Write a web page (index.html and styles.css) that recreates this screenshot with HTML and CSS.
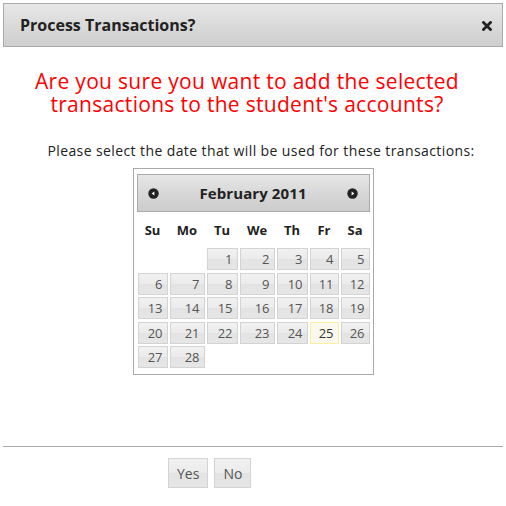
FILE: index.html
```html
<!DOCTYPE html>
<html>
<head>
<meta charset="utf-8">
<link rel="stylesheet" href="styles.css">
</head>
<body>
<div class="dialog">
  <div class="titlebar">
    <span class="title">Process Transactions?</span>
    <span class="close" aria-label="close">
      <svg width="10" height="10" viewBox="0 0 10 10"><path d="M1.5 1.5 L8.5 8.5 M8.5 1.5 L1.5 8.5" stroke="#222" stroke-width="2.8" stroke-linecap="square"/></svg>
    </span>
  </div>
  <div class="content">
    <p class="warning">Are you sure you want to add the selected<br>transactions to the student's accounts?</p>
    <p class="prompt">Please select the date that will be used for these transactions:</p>
    <div class="datepicker">
      <div class="dp-header">
        <span class="nav">
          <svg width="11" height="11" viewBox="0 0 11 11"><circle cx="5.5" cy="5.5" r="5.2" fill="#222"/><path d="M3.6 5.5 L6.4 3.4 L6.4 7.6 Z" fill="#fff"/></svg>
        </span>
        <span class="month">February 2011</span>
        <span class="nav">
          <svg width="11" height="11" viewBox="0 0 11 11"><circle cx="5.5" cy="5.5" r="5.2" fill="#222"/><path d="M7.4 5.5 L4.6 3.4 L4.6 7.6 Z" fill="#fff"/></svg>
        </span>
      </div>
      <div class="dow">
        <span>Su</span><span>Mo</span><span>Tu</span><span>We</span><span>Th</span><span>Fr</span><span>Sa</span>
      </div>
      <div class="days">
        <span class="empty"></span><span class="empty"></span>
        <span class="day">1</span><span class="day">2</span><span class="day">3</span><span class="day">4</span><span class="day">5</span>
        <span class="day">6</span><span class="day">7</span><span class="day">8</span><span class="day">9</span><span class="day">10</span><span class="day">11</span><span class="day">12</span>
        <span class="day">13</span><span class="day">14</span><span class="day">15</span><span class="day">16</span><span class="day">17</span><span class="day">18</span><span class="day">19</span>
        <span class="day">20</span><span class="day">21</span><span class="day">22</span><span class="day">23</span><span class="day">24</span><span class="day today">25</span><span class="day">26</span>
        <span class="day">27</span><span class="day">28</span>
      </div>
    </div>
  </div>
  <div class="buttonpane">
    <button class="btn">Yes</button>
    <button class="btn">No</button>
  </div>
</div>
</body>
</html>
```

FILE: styles.css
```css
html, body {
  margin: 0;
  padding: 0;
  background: #fff;
}
body {
  font-family: "Open Sans", "DejaVu Sans", sans-serif;
  color: #222;
}
.dialog {
  width: 506px;
  height: 506px;
  padding-top: 3px;
  box-sizing: border-box;
}
.titlebar {
  margin: 0 3px;
  height: 44px;
  box-sizing: border-box;
  border: 1px solid #aaa;
  background: linear-gradient(#e8e8e8, #dadada 50%, #cfcfcf 100%);
  display: flex;
  align-items: center;
  justify-content: space-between;
  padding: 0 10px 0 16px;
}
.title {
  font-size: 16px;
  font-weight: bold;
  color: #222;
}
.close {
  display: flex;
  width: 10px;
  height: 10px;
  margin-top: 2px;
}
.content {
  padding: 0 3px;
}
.warning {
  margin: 23px 0 0;
  padding-right: 12px;
  text-align: center;
  color: #ff0000;
  font-size: 21px;
  letter-spacing: 0.3px;
  line-height: 22.5px;
}
.prompt {
  margin: 28px 0 0;
  padding-left: 16px;
  text-align: center;
  font-size: 14px;
  letter-spacing: 0.4px;
  line-height: 16px;
  color: #222;
}
.datepicker {
  width: 241px;
  box-sizing: border-box;
  margin: 9px auto 0;
  border: 1px solid #aaa;
  padding: 5px 3px 6px;
}
.dp-header {
  height: 38px;
  box-sizing: border-box;
  border: 1px solid #aaa;
  background: linear-gradient(#e6e6e6, #d8d8d8 50%, #cccccc 100%);
  display: flex;
  align-items: center;
  justify-content: space-between;
  padding: 0 10px 0 10px;
}
.nav {
  display: flex;
  width: 11px;
  height: 11px;
}
.month {
  font-size: 15px;
  font-weight: bold;
  letter-spacing: 0.1px;
  color: #222;
}
.dow {
  display: grid;
  grid-template-columns: 30px 35px 31px 35px 31px 29px 29px;
  column-gap: 2px;
  padding: 0 1px;
  height: 36px;
  align-items: center;
  font-size: 13px;
  font-weight: bold;
  color: #222;
}
.dow span {
  text-align: center;
}
.days {
  display: grid;
  grid-template-columns: 30px 35px 31px 35px 31px 29px 29px;
  grid-auto-rows: 22px;
  column-gap: 2px;
  row-gap: 2.6px;
  padding: 0 1px;
}
.day {
  box-sizing: border-box;
  border: 1px solid #d3d3d3;
  background: linear-gradient(#f1f1f1, #ebebeb 50%, #e3e3e3 51%, #e6e6e6);
  color: #555;
  font-size: 13px;
  text-align: right;
  padding-right: 4px;
  line-height: 20px;
}
.day.today {
  border-color: #fcefa1;
  background: #fbf9ee;
  color: #363636;
}
.buttonpane {
  margin: 71px 3px 0;
  border-top: 1px solid #aaa;
  padding: 11px 0 0 165px;
  display: flex;
  gap: 6px;
}
.btn {
  font-family: "Open Sans", "DejaVu Sans", sans-serif;
  font-size: 14px;
  color: #555;
  height: 30px;
  box-sizing: border-box;
  border: 1px solid #d3d3d3;
  background: linear-gradient(#f1f1f1, #ebebeb 50%, #e3e3e3 51%, #e6e6e6);
  padding: 0 8px;
  margin: 0;
}
```
